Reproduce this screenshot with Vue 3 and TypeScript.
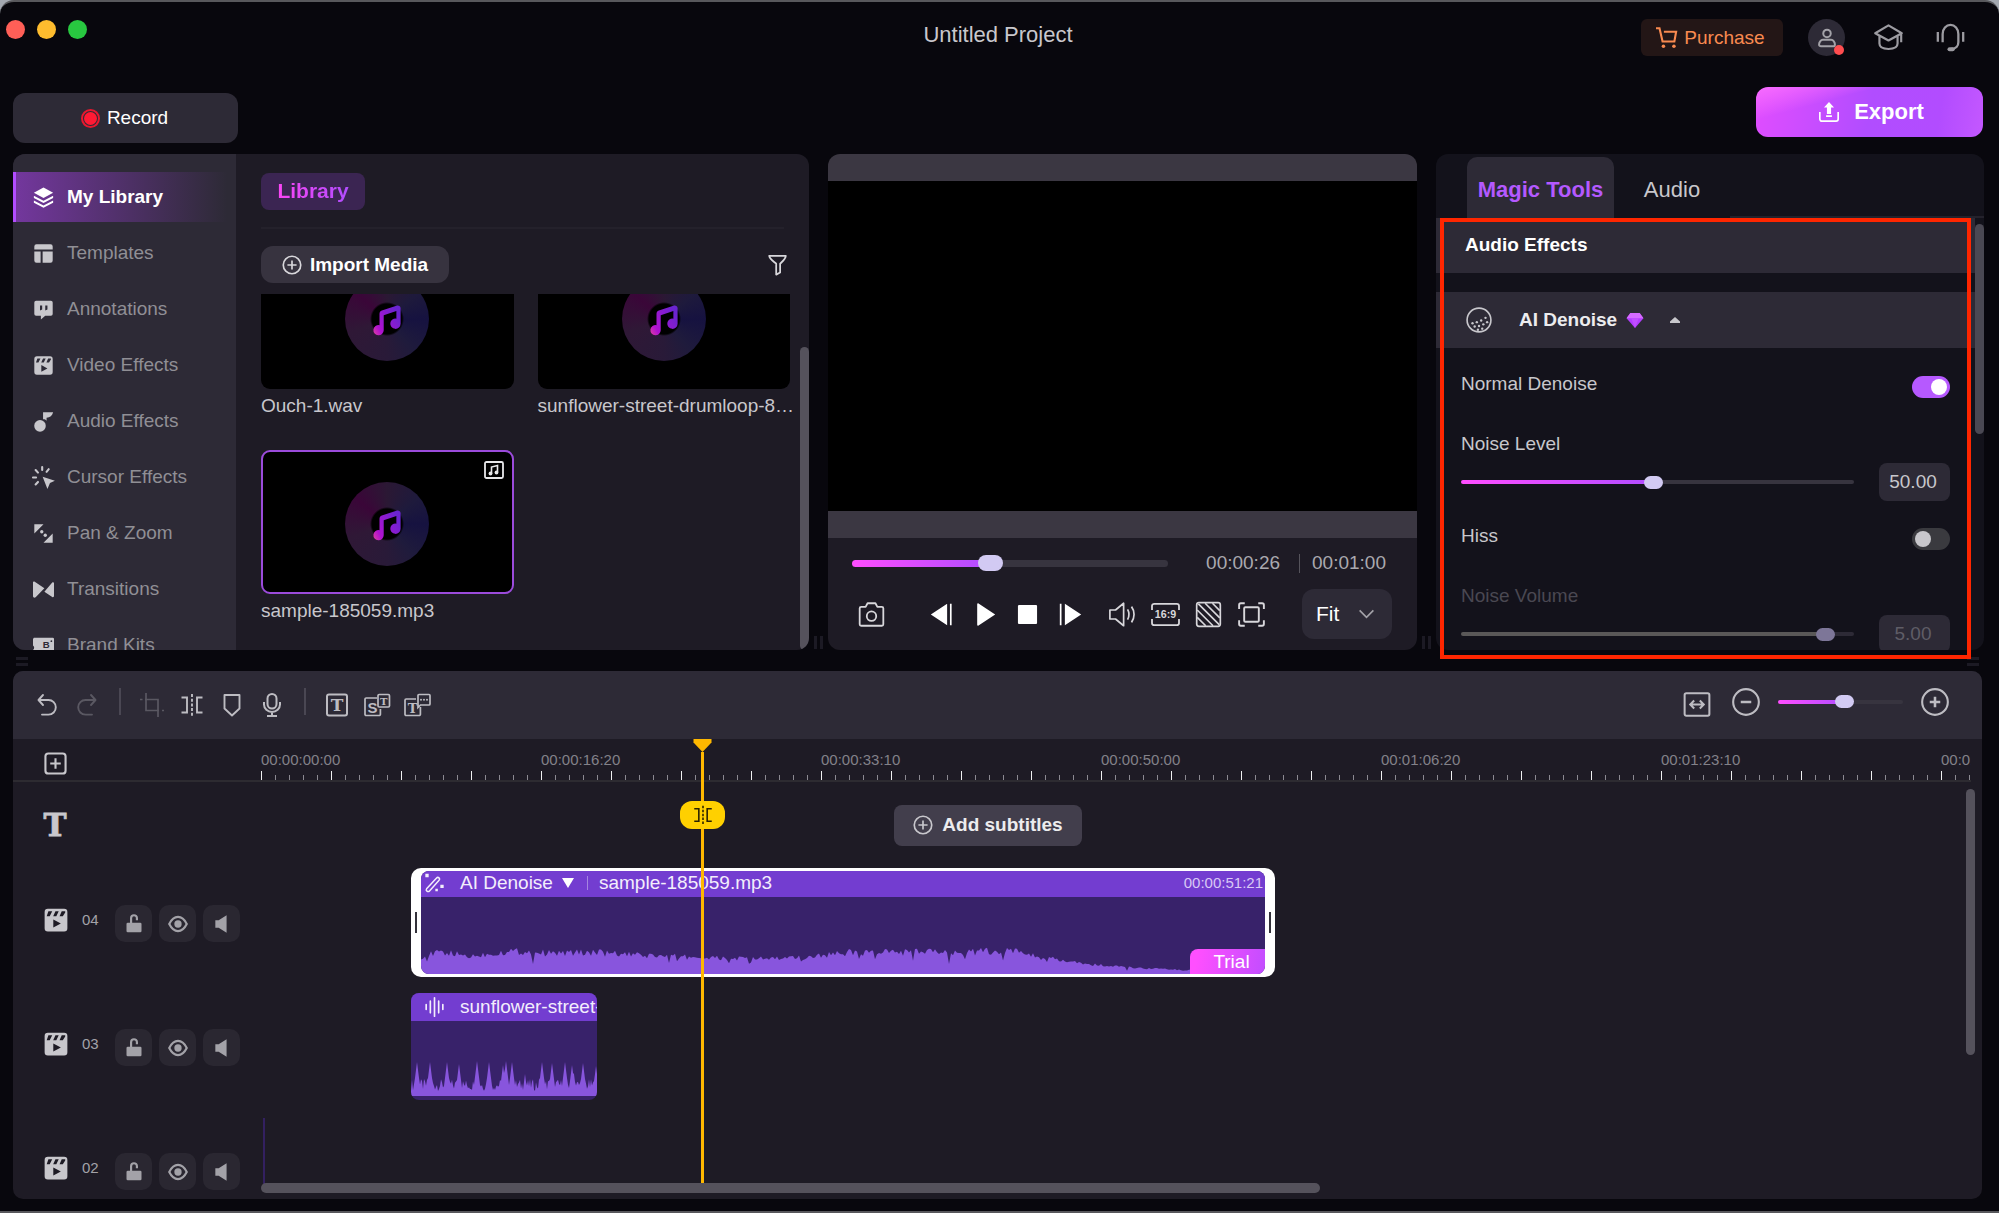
<script setup lang="ts">
import { ref } from 'vue'

const icons: Record<string, string> = {
  layers: '<g fill="currentColor"><path d="M12 .5 23 6.600 12 12.600 1 6.600z"/><path d="M1 10 12 15.800 23 10v2.600L12 18.400 1 12.600zM1 15.400 12 21.200l11-5.800V18l-11 5.800L1 18z"/></g>',
  template: '<g fill="currentColor"><path d="M4 1.500h16a2.500 2.500 0 0 1 2.500 2.500v3.500h-21V4A2.500 2.500 0 0 1 4 1.500zM1.500 9.700h7.200v12.800H4A2.500 2.500 0 0 1 1.500 20zM11 9.700h11.500V20a2.500 2.500 0 0 1-2.500 2.500h-9z"/></g>',
  note: '<path fill="currentColor" fill-rule="evenodd" d="M3.500 2h17A2 2 0 0 1 22.500 4v13a2 2 0 0 1-2 2H14l-5 4.500V19H3.500a2 2 0 0 1-2-2V4a2 2 0 0 1 2-2zM8 7.500v5.500l2.500-1V7.500zM14 7.500v5.500l2.500-1V7.500z"/>',
  clapper: '<path fill="currentColor" fill-rule="evenodd" d="M4.500 1.500h15a3 3 0 0 1 3 3v15a3 3 0 0 1-3 3h-15a3 3 0 0 1-3-3v-15a3 3 0 0 1 3-3zM5 4 3.400 8.500h2.800L8.500 4zM11.500 4 9.400 8.500h2.900L14.500 4zM17.300 4l-2 4.500h3L20.500 5V4zM9.500 11.500v7.500l7-3.700z"/>',
  audio: '<g fill="currentColor"><circle cx="8" cy="17" r="6.600"/><path d="M11.500 1.500h11.500c-1 4-3.500 6-7.500 6.200V11c-1.500-1.600-3-2-4-1.500z"/></g>',
  cursor: '<path fill="currentColor" d="m11 11 14 4.600-5.600 2.800L16.500 25z"/><path stroke="currentColor" stroke-width="2.400" stroke-linecap="round" d="M10.500 0v3.500M18 2.500l-2.500 3M3 3.500l2.700 2.900M0 12h3.500M3 20l2.700-2.900"/>',
  zoom: '<g fill="currentColor"><path d="M1.500 1.500h10.500L1.500 12zM22.500 12v10.500H12z"/><circle cx="10" cy="10" r="1.900"/><circle cx="14" cy="14" r="1.900"/></g>',
  transition: '<g fill="currentColor"><path d="M0 4c0-1 1-1.600 2-1l11 7.500L3 20.800c-1 1-3 .5-3-1zM24 5c0-1-1-1.600-2-1L13 14.500l9 6c1 .8 2 0 2-1z"/></g>',
  brand: '<path fill="currentColor" d="M1 3h21.500A1.500 1.500 0 0 1 24 4.500V22H0v-5a3 3 0 0 0 0-5V4.500z"/><text x="11" y="15" font-size="11" font-weight="700" fill="#2d2a36">B</text><circle cx="21" cy="7" r="1" fill="#2d2a36"/>',
  plusCircle: '<g fill="none" stroke="currentColor" stroke-width="2"><circle cx="12" cy="12" r="10.500"/><path d="M12 6.500v11M6.500 12h11"/></g>',
  filter: '<path fill="none" stroke="currentColor" stroke-width="2" stroke-linejoin="round" d="M2.500 1.500h19c-.3 3.500-3.500 6-6.500 9v10L10.500 23V10.500c-3.500-3-7.500-5.500-8-9z"/>',
  cart: '<g fill="none" stroke="currentColor" stroke-width="2.400"><path d="M0 1.500h4l3.500 15h13.500L23 5.500H9"/></g><g fill="currentColor"><circle cx="8.500" cy="22" r="2"/><circle cx="20.500" cy="22" r="2"/></g>',
  user: '<g fill="none" stroke="currentColor" stroke-width="2.400"><circle cx="12" cy="6.500" r="4.500"/><path d="M7 14.200h10c2.500 0 4.500 3 4.500 5.500 0 1.500-1 2.300-2.300 2.300H4.800c-1.300 0-2.300-.8-2.300-2.300 0-2.500 2-5.500 4.500-5.500z"/></g>',
  cap: '<g fill="none" stroke="currentColor" stroke-width="1.800" stroke-linejoin="round"><path d="M12 2 23 8.500 12 14.500 1 8.500zM4.500 11v6c0 3.500 3 4.500 7.500 4.500s7.500-1 7.500-4.500v-6M22.500 9v7"/></g>',
  headset: '<g fill="none" stroke="currentColor" stroke-width="1.900"><path d="M5.500 16V9a6.500 7.500 0 0 1 13 0v7c0 3-2 5.500-6 5.500M1.500 7.500v8M22.500 7.500v8"/></g><rect x="9.500" y="20" width="6" height="3.400" rx="1.700" fill="currentColor"/>',
  exportIcon: '<path fill="currentColor" d="m12 0 6 6.500h-3.500v8h-5v-8H6zM8.500 16h7v2h-7z"/><path fill="none" stroke="currentColor" stroke-width="2" d="M1 12v8.500A2.500 2.500 0 0 0 3.500 23h17a2.500 2.500 0 0 0 2.500-2.500V12"/>',
  camera: '<g fill="none" stroke="currentColor" stroke-width="1.600" stroke-linejoin="round"><path d="M1.500 6.500c0-.8.500-1.300 1.300-1.300h4L8.500 2h7l1.700 3.200h4c.8 0 1.300.5 1.300 1.300v14.200c0 .8-.5 1.300-1.300 1.300H2.800c-.8 0-1.300-.5-1.300-1.300z"/><circle cx="12" cy="13.500" r="4.200"/></g>',
  prev: '<path fill="currentColor" d="M2.500 12 17 2.500v19zM19.500 2.500H21v19h-1.500z"/>',
  play: '<path fill="currentColor" d="M5.500 2.800c0-.8.700-1 1.200-.6L21.500 12 6.700 21.800c-.5.400-1.200.2-1.200-.6z"/>',
  stop: '<rect x="3.500" y="3.500" width="17" height="17" rx="1" fill="currentColor"/>',
  next: '<path fill="currentColor" d="M21.500 12 7 2.500v19zM2.500 2.500H4v19H2.500z"/>',
  volume: '<g fill="none" stroke="currentColor" stroke-width="1.500" stroke-linejoin="round"><path d="M.8 8h5L13 2v20l-7.200-6h-5zM16.500 7.500c1.600 2.800 1.600 6.200 0 9M20 5c3 4 3 10 0 14"/></g>',
  ratio: '<path fill="none" stroke="currentColor" stroke-width="1.600" d="M0 8V4.500a2 2 0 0 1 2-2h20a2 2 0 0 1 2 2V8M0 16v3.500a2 2 0 0 0 2 2h20a2 2 0 0 0 2-2V16"/><text x="12" y="15.500" text-anchor="middle" font-size="9.500" font-weight="700" fill="currentColor">16:9</text>',
  hatch: '<g fill="none" stroke="currentColor" stroke-width="1.500"><rect x="1.500" y="1.500" width="21" height="21" rx="2"/><path d="m2 14.500 7.500 7.500M2 8l14 14M3 2.500 21.500 21M9 2l13 13M15.500 2 22 8.500"/></g>',
  full: '<g fill="none" stroke="currentColor" stroke-width="1.700"><rect x="5.500" y="5.500" width="13" height="13" rx="1"/><path d="M1 7V3.500A1.500 1.500 0 0 1 2.500 2H6M18 2h3.500A1.500 1.500 0 0 1 23 3.500V7M1 17v3.500A1.500 1.500 0 0 0 2.500 22H6M18 22h3.500a1.500 1.500 0 0 0 1.500-1.500V17"/></g>',
  denoise: '<circle cx="12" cy="12" r="11" fill="none" stroke="currentColor" stroke-width="1.500"/><g fill="currentColor"><circle cx="6" cy="15" r="1.100"/><circle cx="10" cy="14" r="1.100"/><circle cx="14" cy="12.500" r="1.100"/><circle cx="18" cy="10" r="1.100"/><circle cx="8" cy="18" r="1.100"/><circle cx="12" cy="17.500" r="1.100"/><circle cx="16" cy="16" r="1.100"/><circle cx="19.500" cy="14" r="1.100"/><circle cx="11" cy="21" r="1.100"/><circle cx="15" cy="20" r="1.100"/></g>',
  undo: '<path fill="none" stroke="currentColor" stroke-width="1.900" stroke-linecap="round" stroke-linejoin="round" d="m8 2-4.500 5L8 12M4 7h9.500a7.300 7.300 0 0 1 0 14.600H7"/>',
  redo: '<path fill="none" stroke="currentColor" stroke-width="1.900" stroke-linecap="round" stroke-linejoin="round" d="m16 2 4.500 5-4.500 5M20 7h-9.500a7.300 7.300 0 0 0 0 14.600H17"/>',
  crop: '<path fill="none" stroke="currentColor" stroke-width="1.700" d="M6 0v17.500h13M22 17.500h2M0 6.500h2.500M5 6.500h13V24"/>',
  split: '<g fill="none" stroke="currentColor" stroke-width="1.900"><path d="M1.500 4.500h5.500v15h-5.500M22.500 4.500H17v15h5.500"/><path stroke-dasharray="3 1.700" d="M12 1v22"/></g>',
  shield: '<path fill="none" stroke="currentColor" stroke-width="1.900" stroke-linejoin="round" d="M4.500 2h15v13.500L12 22.500l-7.500-7z"/>',
  mic: '<g fill="none" stroke="currentColor" stroke-width="2"><rect x="7.500" y="1" width="9" height="14.500" rx="4.500"/><path d="M4 9v2.500a8 7.500 0 0 0 16 0V9M12 19v4M7 23h10"/></g>',
  textBox: '<rect x="2" y="1.500" width="20" height="21" rx="2" fill="none" stroke="currentColor" stroke-width="2"/><text class="slab" x="12" y="18" text-anchor="middle" font-size="17" fill="currentColor">T</text>',
  styleText: '<g fill="none" stroke="currentColor" stroke-width="1.700"><path d="M12 5H1.200A1.200 1.200 0 0 0 0 6.200v15A1.200 1.200 0 0 0 1.200 22.500h13a1.200 1.200 0 0 0 1.200-1.200V16"/><rect x="13" y="1.500" width="11.500" height="12.500" rx="1.200"/></g><text x="7.500" y="19.500" text-anchor="middle" font-size="15" font-weight="700" fill="currentColor">S</text><text class="slab" x="18.800" y="11.500" text-anchor="middle" font-size="10" fill="currentColor">T</text>',
  bubbleText: '<g fill="none" stroke="currentColor" stroke-width="1.700"><path d="M11 6H1.200A1.200 1.200 0 0 0 0 7.200v14A1.200 1.200 0 0 0 1.200 22.500h13a1.200 1.200 0 0 0 1.200-1.200V14"/><path d="M14 1.500h10a1 1 0 0 1 1 1V11a1 1 0 0 1-1 1h-8.500L13 14.500v-12a1 1 0 0 1 1-1z"/></g><text class="slab" x="7.500" y="19.500" text-anchor="middle" font-size="13" fill="currentColor">T</text><g fill="currentColor"><circle cx="16" cy="6.800" r="1"/><circle cx="19" cy="6.800" r="1"/><circle cx="22" cy="6.800" r="1"/></g>',
  fitWidth: '<g fill="none" stroke="currentColor" stroke-width="1.800"><rect x="1" y="2" width="22" height="20" rx="1.500"/><path d="M6 12h12M9.500 8.500 6 12l3.500 3.500M14.500 8.500 18 12l-3.500 3.500"/></g>',
  minus: '<g fill="none" stroke="currentColor" stroke-width="1.800"><circle cx="12" cy="12" r="11"/><path stroke-width="2.200" d="M7.500 12h9"/></g>',
  plus: '<g fill="none" stroke="currentColor" stroke-width="1.800"><circle cx="12" cy="12" r="11"/><path stroke-width="2.200" d="M7.500 12h9M12 7.500v9"/></g>',
  addTrack: '<g fill="none" stroke="currentColor" stroke-width="2.200"><rect x="1.500" y="1.500" width="21" height="21" rx="3"/><path d="M12 6.500v11M6.500 12h11"/></g>',
  bigT: '<text class="slab" x="12" y="23" text-anchor="middle" font-size="31" fill="currentColor" stroke="currentColor" stroke-width="0.8">T</text>',
  lock: '<rect x="3" y="10.500" width="18" height="11.500" rx="1.500" fill="currentColor"/><path fill="none" stroke="currentColor" stroke-width="2.600" d="M8.500 11V5a3.500 3.500 0 0 1 7 0v2.500"/>',
  eye: '<path fill="none" stroke="currentColor" stroke-width="2.600" d="M1.500 12C4 7 7.500 3.500 12 3.500S20 7 22.500 12C20 17 16.500 20.500 12 20.500S4 17 1.500 12z"/><circle cx="12" cy="12" r="4.400" fill="currentColor"/>',
  speaker: '<path fill="currentColor" d="M4 7.500h4L17.500 1.500v21L8 16.500H4z"/>',
  wand: '<g fill="none" stroke="currentColor" stroke-width="1.800"><path d="m2.500 19 12-13a2 2 0 0 1 3 2.800L6 21.500c-2 2-5-.5-3.500-2.500z"/></g><g fill="currentColor"><path d="M1 1h4v4H1zM19 14h4v4h-4zM13 19h3v3h-3z"/></g>',
  bars: '<path stroke="currentColor" stroke-width="2" stroke-linecap="round" d="M2 9v6M7 5v14M12 1v22M17 5v14M22 9v6"/>',
  chevron: '<path fill="none" stroke="currentColor" stroke-width="2.600" d="m1 7 11 11L23 7"/>',
}

const menu = [
  { icon: 'layers', label: 'My Library', active: true },
  { icon: 'template', label: 'Templates' },
  { icon: 'note', label: 'Annotations' },
  { icon: 'clapper', label: 'Video Effects' },
  { icon: 'audio', label: 'Audio Effects' },
  { icon: 'cursor', label: 'Cursor Effects' },
  { icon: 'zoom', label: 'Pan & Zoom' },
  { icon: 'transition', label: 'Transitions' },
  { icon: 'brand', label: 'Brand Kits' },
]

const media = [
  { name: 'Ouch-1.wav', selected: false },
  { name: 'sunflower-street-drumloop-8…', selected: false },
  { name: 'sample-185059.mp3', selected: true },
]

const transport = [
  { icon: 'prev', label: 'Previous frame' },
  { icon: 'play', label: 'Play' },
  { icon: 'stop', label: 'Stop' },
  { icon: 'next', label: 'Next frame' },
]
const view = [
  { icon: 'volume', label: 'Volume' },
  { icon: 'ratio', label: 'Aspect ratio' },
  { icon: 'hatch', label: 'Background' },
  { icon: 'full', label: 'Full screen' },
]

const tools = [
  [
    { icon: 'undo', label: 'Undo' },
    { icon: 'redo', label: 'Redo', off: true },
  ],
  [
    { icon: 'crop', label: 'Crop', off: true },
    { icon: 'split', label: 'Split' },
    { icon: 'shield', label: 'Marker' },
    { icon: 'mic', label: 'Voiceover' },
  ],
  [
    { icon: 'textBox', label: 'Text' },
    { icon: 'styleText', label: 'Speech to text' },
    { icon: 'bubbleText', label: 'Text to speech' },
  ],
]

const stamps = ['00:00:00:00', '00:00:16:20', '00:00:33:10', '00:00:50:00', '00:01:06:20', '00:01:23:10', '00:01:40:00']

const position = ref(26)
const zoomLevel = ref(54)
const level = ref(49)
const hissLevel = ref(95)
const denoise = ref(true)
const hiss = ref(false)

const noise = (i: number) => {
  const v = Math.sin(i * 12.9898) * 43758.5453
  return v - Math.floor(v)
}

/* Height of the long clip's waveform, as [x, height] stops */
const envelope = [
  [0, 17], [20, 21], [50, 17], [90, 22], [130, 20], [170, 21], [215, 18], [250, 17], [300, 15],
  [370, 15], [400, 18], [430, 21], [500, 21], [596, 22], [620, 16], [660, 10], [710, 6], [760, 4], [844, 3],
]
const heightAt = (x: number) => {
  let i = 1
  while (i < envelope.length - 1 && envelope[i][0] < x) i++
  const [x0, h0] = envelope[i - 1]
  const [x1, h1] = envelope[i]
  return h0 + ((h1 - h0) * (x - x0)) / (x1 - x0)
}
const sampleWave = (() => {
  let d = 'M0 77'
  for (let x = 0; x <= 844; x += 2) {
    const h = heightAt(x)
    const dip = noise(x + 7) > 0.95 ? h * 0.4 : 0
    d += `L${x} ${(77 - h - (noise(x) - 0.4) * h * 0.35 + dip).toFixed(1)}`
  }
  return d + 'L844 77Z'
})()

const beats = [
  [6, 34], [19, 34], [36, 34], [48, 32], [66, 35], [78, 34], [92, 31], [95, 35], [101, 34], [114, 22],
  [131, 34], [141, 33], [154, 34], [161, 31], [163, 22], [172, 33], [185, 30],
]
const drumWave = (() => {
  let d = 'M0 73'
  for (let x = 0; x <= 186; x++) {
    let h = 5 + noise(x) * 12
    for (const [b, top] of beats) h = Math.max(h, top - Math.abs(x - b) * 8)
    d += `L${x} ${(75 - h).toFixed(1)}`
  }
  return d + 'L186 75L0 75Z'
})()

const tracks = [
  { id: '04', clip: 'sample' },
  { id: '03', clip: 'drums' },
  { id: '02', clip: 'sliver' },
]
const trackButtons = [
  { icon: 'lock', label: 'Lock track' },
  { icon: 'eye', label: 'Show track' },
  { icon: 'speaker', label: 'Mute track' },
]
</script>

<template>
  <div class="window">
    <header class="titlebar">
      <div class="lights"><i class="red"></i><i class="amber"></i><i class="green"></i></div>
      <h1>Untitled Project</h1>
      <div class="account">
        <button class="purchase" type="button">
          <svg viewBox="0 0 24 24" v-html="icons.cart"></svg>Purchase
        </button>
        <button class="avatar" type="button" aria-label="Account">
          <svg viewBox="0 0 24 24" v-html="icons.user"></svg><i></i>
        </button>
        <button class="plain" type="button" aria-label="Tutorials"><svg viewBox="0 0 24 24" v-html="icons.cap"></svg></button>
        <button class="plain" type="button" aria-label="Support"><svg viewBox="0 0 24 24" v-html="icons.headset"></svg></button>
      </div>
    </header>

    <div class="actions">
      <button class="record" type="button"><i></i>Record</button>
      <button class="export" type="button">
        <svg viewBox="0 0 24 24" v-html="icons.exportIcon"></svg>Export
      </button>
    </div>

    <main class="workspace">
      <section class="browser">
        <nav class="menu">
          <a v-for="m in menu" :key="m.label" href="#" :class="{ active: m.active }">
            <svg viewBox="0 0 24 24" v-html="icons[m.icon]"></svg>{{ m.label }}
          </a>
        </nav>
        <div class="library">
          <div class="library-head"><h2><span>Library</span></h2></div>
          <div class="library-tools">
            <button class="import" type="button"><svg viewBox="0 0 24 24" v-html="icons.plusCircle"></svg>Import Media</button>
            <button class="filter" type="button" aria-label="Filter"><svg viewBox="0 0 24 24" v-html="icons.filter"></svg></button>
          </div>
          <div class="media">
            <div class="media-grid">
              <figure v-for="f in media" :key="f.name">
                <div class="thumb" :class="{ selected: f.selected }">
                  <div class="disc">
                    <svg viewBox="0 0 32 34">
                      <defs>
                        <linearGradient id="note-fill" x1="0" x2="1" y1="1" y2="0.4">
                          <stop offset="0" stop-color="#e040a0" />
                          <stop offset="0.25" stop-color="#b012d0" />
                          <stop offset="1" stop-color="#6a24d0" />
                        </linearGradient>
                      </defs>
                      <path
                        fill="url(#note-fill)"
                        d="M8 23V11c0-2 .8-3 2.500-3.600L26 2.300c2-.7 4.500.3 4.500 2.600V21.500a5.500 5.500 0 1 1-4.500-5.400V8L12.500 12.500V28.500A5.500 5.500 0 1 1 8 23z"
                      />
                    </svg>
                  </div>
                  <svg v-if="f.selected" class="badge" viewBox="0 0 20 18">
                    <rect x="1" y="1" width="18" height="16" rx="1.500" fill="none" stroke="#e8e8ea" stroke-width="1.800" />
                    <path d="M7.500 12.500V6l6-1.500V11" fill="none" stroke="#e8e8ea" stroke-width="1.600" />
                    <circle cx="6.500" cy="12.500" r="1.900" fill="#e8e8ea" />
                    <circle cx="12.500" cy="11.500" r="1.900" fill="#e8e8ea" />
                  </svg>
                </div>
                <figcaption>{{ f.name }}</figcaption>
              </figure>
            </div>
          </div>
          <i class="bar library-bar"></i>
        </div>
      </section>

      <div class="grip-x"><i></i><i></i></div>

      <section class="preview">
        <div class="stage"></div>
        <div class="progress">
          <input v-model="position" class="range thick" type="range" min="0" max="60" aria-label="Playback position" :style="{ '--fill': (position / 60) * 100 + '%' }" />
          <time>00:00:26</time><i></i><time>00:01:00</time>
        </div>
        <div class="controls">
          <button type="button" aria-label="Snapshot"><svg viewBox="0 0 24 24" v-html="icons.camera"></svg></button>
          <div class="group solid">
            <button v-for="b in transport" :key="b.icon" type="button" :aria-label="b.label"><svg viewBox="0 0 24 24" v-html="icons[b.icon]"></svg></button>
          </div>
          <div class="group">
            <button v-for="b in view" :key="b.icon" type="button" :aria-label="b.label"><svg viewBox="0 0 24 24" v-html="icons[b.icon]"></svg></button>
          </div>
          <div class="fit">
            <select aria-label="Preview size"><option>Fit</option></select>
            <svg viewBox="0 0 24 24" v-html="icons.chevron"></svg>
          </div>
        </div>
      </section>

      <div class="grip-x"><i></i><i></i></div>

      <section class="inspector">
        <div class="inspector-body">
          <div class="tabs">
            <button class="on" type="button">Magic Tools</button>
            <button type="button">Audio</button>
            <i></i>
          </div>
          <div class="effects">
            <h3>Audio Effects</h3>
            <button class="effect" type="button">
              <svg class="effect-icon" viewBox="0 0 24 24" v-html="icons.denoise"></svg>
              AI Denoise
              <svg class="gem" viewBox="0 0 18 16">
                <path d="M4 0h10l4 5.500L9 16 0 5.500z" fill="#b23cff" />
                <path d="M4 0h10l4 5.500H0z" fill="#d56bff" />
                <path d="M5 5.500h8L9 16z" fill="#c04dff" />
              </svg>
              <svg class="caret" viewBox="0 0 10 6"><path d="M5 0l5 4.500V6H0V4.500z" fill="#c8c7cc" /></svg>
            </button>
            <div class="params">
              <label class="toggle">Normal Denoise<input v-model="denoise" type="checkbox" /></label>
              <div class="param">
                <label for="noise-level">Noise Level</label>
                <div>
                  <input id="noise-level" v-model="level" class="range" type="range" :style="{ '--fill': level + '%' }" />
                  <input class="value" type="text" value="50.00" aria-label="Noise level value" />
                </div>
              </div>
              <label class="toggle">Hiss<input v-model="hiss" type="checkbox" /></label>
              <div class="param disabled">
                <label for="noise-volume">Noise Volume</label>
                <div>
                  <input id="noise-volume" v-model="hissLevel" class="range" type="range" disabled :style="{ '--fill': hissLevel + '%' }" />
                  <input class="value" type="text" value="5.00" disabled aria-label="Noise volume value" />
                </div>
              </div>
            </div>
          </div>
          <i class="bar inspector-bar"></i>
        </div>
        <div class="highlight"></div>
      </section>
    </main>

    <div class="grip-y"><span><i></i><i></i></span><span><i></i><i></i></span></div>

    <section class="timeline">
      <div class="toolbar">
        <template v-for="(group, n) in tools" :key="n">
          <i v-if="n" class="sep"></i>
          <div class="group">
            <button v-for="t in group" :key="t.icon" type="button" :aria-label="t.label" :disabled="t.off"><svg viewBox="0 0 24 24" v-html="icons[t.icon]"></svg></button>
          </div>
        </template>
        <button class="fit-width" type="button" aria-label="Fit to window"><svg viewBox="0 0 24 24" v-html="icons.fitWidth"></svg></button>
        <div class="zoomer">
          <button type="button" aria-label="Zoom out"><svg viewBox="0 0 24 24" v-html="icons.minus"></svg></button>
          <input v-model="zoomLevel" class="range" type="range" aria-label="Timeline zoom" :style="{ '--fill': zoomLevel + '%' }" />
          <button type="button" aria-label="Zoom in"><svg viewBox="0 0 24 24" v-html="icons.plus"></svg></button>
        </div>
      </div>

      <div class="tracks">
        <div class="row ruler-row">
          <div class="head">
            <button type="button" aria-label="Add track"><svg viewBox="0 0 24 24" v-html="icons.addTrack"></svg></button>
          </div>
          <div class="ruler"><span v-for="s in stamps" :key="s">{{ s }}</span></div>
        </div>

        <div class="row subtitle-row">
          <div class="head"><svg viewBox="0 0 24 24" v-html="icons.bigT"></svg></div>
          <button class="subtitles" type="button"><svg viewBox="0 0 24 24" v-html="icons.plusCircle"></svg>Add subtitles</button>
        </div>

        <div v-for="t in tracks" :key="t.id" class="row track">
          <div class="head">
            <div class="track-id"><svg viewBox="0 0 24 24" v-html="icons.clapper"></svg>{{ t.id }}</div>
            <button v-for="b in trackButtons" :key="b.icon" type="button" :aria-label="b.label"><svg viewBox="0 0 24 24" v-html="icons[b.icon]"></svg></button>
          </div>

          <div v-if="t.clip === 'sample'" class="frame">
            <i class="edge"></i>
            <div class="clip">
              <div class="clip-head">
                <svg viewBox="0 0 24 24" v-html="icons.wand"></svg>
                <span>AI Denoise</span>
                <svg class="down" viewBox="0 0 12 10"><path d="M0 0h12L6 10z" fill="#fff" /></svg>
                <i></i>
                <span>sample-185059.mp3</span>
                <time>00:00:51:21</time>
              </div>
              <svg class="wave" viewBox="0 0 844 77" preserveAspectRatio="none"><path :d="sampleWave" /></svg>
              <span class="trial">Trial</span>
            </div>
            <i class="edge"></i>
          </div>

          <div v-else-if="t.clip === 'drums'" class="clip drums">
            <div class="clip-head">
              <svg viewBox="0 0 24 24" v-html="icons.bars"></svg>
              <span>sunflower-street-</span>
            </div>
            <svg class="wave" viewBox="0 0 186 76" preserveAspectRatio="none"><path :d="drumWave" /></svg>
          </div>

          <div v-else class="sliver"></div>
        </div>

        <div class="playhead">
          <svg viewBox="0 0 18 13"><path d="M0 0h18v3.500L9 13 0 3.500z" fill="#ffb800" /></svg>
          <i></i>
          <button type="button" aria-label="Split at playhead"><svg viewBox="0 0 24 24" v-html="icons.split"></svg></button>
        </div>
        <i class="bar bar-y"></i>
        <i class="bar bar-x"></i>
      </div>
    </section>
  </div>
</template>

<style>
html,
body {
  margin: 0;
  background: #a3a8b0;
}
svg text {
  font-family: "Liberation Sans", Arial, sans-serif;
}
svg text.slab {
  font-family: "DejaVu Serif", serif;
  font-weight: 700;
}
</style>

<style scoped>
* {
  box-sizing: border-box;
}
.window {
  display: flex;
  flex-direction: column;
  min-height: 100vh;
  border: solid #58585c;
  border-width: 2px 0;
  border-radius: 14px 14px 0 0;
  background: #08070d;
  color: #c8c7cc;
  font: 19px/24px "Liberation Sans", Arial, sans-serif;
  overflow: hidden;
}
button,
input,
select {
  margin: 0;
  padding: 0;
  border: 0;
  background: none;
  color: inherit;
  font: inherit;
}
button {
  display: flex;
  align-items: center;
  justify-content: center;
}
svg {
  display: block;
  flex: none;
  overflow: visible;
}
h1,
h2,
h3,
figure {
  margin: 0;
}

/* Title bar */
.titlebar {
  display: grid;
  grid-template-columns: 1fr auto 1fr;
  align-items: start;
  height: 85px;
  padding: 17px 33px 0 6px;
}
.lights {
  display: flex;
  gap: 12px;
  padding-top: 1px;
}
.lights i {
  width: 19px;
  height: 19px;
  border-radius: 50%;
}
.red {
  background: #ff5f57;
}
.amber {
  background: #febc2e;
}
.green {
  background: #28c840;
}
h1 {
  padding: 4px 0 0 24px;
  font-size: 22px;
  font-weight: 400;
}
.account {
  display: flex;
  justify-content: flex-end;
  align-items: center;
}
.purchase {
  gap: 7px;
  width: 142px;
  height: 37px;
  margin-right: 25px;
  padding-right: 3px;
  border-radius: 6px;
  background: #231616;
  color: #f98a50;
}
.purchase svg {
  width: 21px;
  height: 21px;
}
.avatar {
  position: relative;
  width: 37px;
  height: 37px;
  margin-right: 28px;
  border-radius: 50%;
  background: #2d2a36;
  color: #a3a2a8;
}
.avatar svg {
  width: 20px;
  height: 20px;
}
.avatar i {
  position: absolute;
  right: 1px;
  bottom: 1px;
  width: 10px;
  height: 10px;
  border-radius: 50%;
  background: #ff4d4f;
}
.plain {
  color: #9c9ba1;
}
.plain svg {
  width: 31px;
  height: 29px;
}
.plain + .plain {
  margin-left: 31px;
}

/* Record and export */
.actions {
  display: flex;
  justify-content: space-between;
  height: 67px;
  padding: 0 16px 0 13px;
}
.record {
  gap: 7px;
  width: 225px;
  height: 50px;
  margin-top: 6px;
  padding-right: 2px;
  border-radius: 12px;
  background: #2d2a36;
  color: #fff;
}
.record i {
  width: 19px;
  height: 19px;
  border: 2px solid #e8182f;
  border-radius: 50%;
  background: #ff1a34 content-box;
  padding: 1px;
}
.export {
  gap: 15px;
  width: 227px;
  height: 50px;
  padding-left: 4px;
  border-radius: 12px;
  background: linear-gradient(165deg, #f86cff 0%, rgba(217, 77, 255, 0) 30%), linear-gradient(100deg, #e04dff 0%, #d04dff 18%, #b14dff 50%, #b24cff 80%, #c458ff 100%);
  color: #fff;
  font-size: 22px;
  font-weight: 700;
}
.export svg {
  width: 20px;
  height: 20px;
}

/* Workspace */
.workspace {
  display: grid;
  grid-template-rows: 496px;
  grid-template-columns: minmax(0, 796fr) 19px minmax(0, 589fr) 19px minmax(0, 548fr);
  padding: 0 15px 0 13px;
}
.grip-x {
  display: flex;
  align-items: flex-end;
  justify-content: center;
  gap: 3px;
  padding-bottom: 1px;
}
.grip-x i {
  width: 3px;
  height: 13px;
  background: #1c1a24;
}
.grip-y {
  display: flex;
  justify-content: space-between;
  height: 21px;
  padding: 7px 20px 0 16px;
}
.grip-y i {
  display: block;
  width: 12px;
  height: 3px;
  margin-bottom: 3px;
  background: #1c1a24;
}
.bar {
  position: absolute;
  width: 9px;
  border-radius: 5px;
  background: #55525c;
}
.browser {
  display: flex;
  border-radius: 12px;
  background: #1e1b25;
  overflow: hidden;
}
.menu {
  display: flex;
  flex: none;
  flex-direction: column;
  gap: 6px;
  width: 223px;
  padding-top: 18px;
  background: #2d2a36;
}
.menu a {
  display: flex;
  flex: none;
  align-items: center;
  gap: 13px;
  height: 50px;
  padding-left: 20px;
  color: #908f95;
  text-decoration: none;
}
.menu svg {
  width: 21px;
  height: 21px;
  color: #c8c7cc;
}
.menu .active {
  border-left: 3px solid #b24cff;
  padding-left: 17px;
  background: linear-gradient(90deg, #73379d, #2d2a36 96%);
  color: #fff;
  font-weight: 700;
}
.menu .active svg {
  color: #fff;
}
.library {
  position: relative;
  display: flex;
  flex: 1;
  flex-direction: column;
  min-width: 0;
  padding: 19px 10px 0 25px;
}
.library-head {
  height: 56px;
  margin-right: 15px;
  border-bottom: 2px solid #24212b;
}
h2 {
  width: 104px;
  height: 37px;
  border-radius: 8px;
  background: #3b2552;
  font-size: 21px;
  line-height: 36px;
  text-align: center;
}
h2 span {
  background: linear-gradient(90deg, #fb45f5, #b14dff);
  background-clip: text;
  color: transparent;
}
.library-tools {
  display: flex;
  align-items: center;
  justify-content: space-between;
  margin: 17px 11px 11px 0;
}
.import {
  gap: 8px;
  width: 188px;
  height: 37px;
  border-radius: 12px;
  background: #37333f;
  color: #fff;
  font-weight: 700;
}
.import svg {
  width: 20px;
  height: 20px;
  color: #d8d7db;
}
.filter svg {
  width: 21px;
  height: 22px;
  color: #d8d7db;
}
.media {
  flex: 1;
  min-height: 0;
  overflow: hidden;
}
.media-grid {
  display: grid;
  grid-template-columns: repeat(2, minmax(0, 1fr));
  gap: 27px 24px;
  margin: -49px 9px 0 0;
}
.thumb {
  position: relative;
  display: flex;
  align-items: center;
  justify-content: center;
  height: 144px;
  padding-top: 4px;
  border-radius: 9px;
  background: #000;
}
.thumb.selected {
  border: 2px solid #9b4bdb;
}
.disc {
  display: flex;
  align-items: center;
  justify-content: center;
  width: 84px;
  height: 84px;
  border-radius: 50%;
  background: radial-gradient(circle, #000 0 15px, transparent 17px),
    conic-gradient(#2b1834, #1e1a3c 50deg, #161240 90deg, #1f1b3c 140deg, #291a38 180deg, #2f1836 250deg, #3a0638 310deg, #2b1834);
}
.disc svg {
  width: 30px;
  height: 33px;
}
.badge {
  position: absolute;
  top: 9px;
  right: 8px;
  width: 20px;
  height: 18px;
}
figcaption {
  line-height: 34px;
  white-space: nowrap;
}
.library-bar {
  top: 193px;
  right: 0;
  bottom: 0;
}

/* Preview */
.preview {
  display: flex;
  flex-direction: column;
  border-radius: 12px;
  background: #1e1b25;
  overflow: hidden;
}
.stage {
  flex: 1;
  border: solid #3b3742;
  border-width: 27px 0;
  background: #000;
}
.progress {
  display: flex;
  align-items: center;
  height: 50px;
  padding: 0 31px 0 24px;
}
.progress .range {
  flex: 1;
  margin-right: 38px;
}
.progress i {
  width: 1px;
  height: 19px;
  margin: 0 12px 0 19px;
  background: #55535b;
}
time {
  color: #aaa9af;
}
.controls {
  display: flex;
  align-items: center;
  height: 62px;
  padding: 0 25px 10px 30px;
  color: #d8d7db;
}
.controls svg {
  width: 27px;
  height: 27px;
}
.group {
  display: flex;
  gap: 16px;
}
.controls .solid {
  margin: 0 25px 0 43px;
  color: #fff;
}
.fit {
  position: relative;
  width: 90px;
  margin-left: auto;
}
.fit select {
  width: 100%;
  height: 50px;
  padding-left: 14px;
  border-radius: 12px;
  background: #2d2a36;
  color: #fff;
  font-size: 21px;
  appearance: none;
}
.fit svg {
  position: absolute;
  top: 17px;
  right: 18px;
  width: 15px;
  height: 15px;
  color: #a3a2a8;
  pointer-events: none;
}

/* Sliders */
.range {
  --track: 4px;
  --thumb-w: 19px;
  --thumb-h: 13px;
  min-width: 0;
  height: 20px;
  appearance: none;
}
.range.thick {
  --track: 7px;
  --thumb-w: 25px;
  --thumb-h: 16px;
}
.range::-webkit-slider-runnable-track {
  height: var(--track);
  border-radius: 4px;
  background: linear-gradient(90deg, #ff4dff, #b14dff) 0 0 / var(--fill) 100% no-repeat, #37343f;
}
.range::-webkit-slider-thumb {
  width: var(--thumb-w);
  height: var(--thumb-h);
  margin-top: calc((var(--track) - var(--thumb-h)) / 2);
  border-radius: 8px;
  background: #d2caf3;
  appearance: none;
}
.range:disabled::-webkit-slider-runnable-track {
  background: linear-gradient(#5a5858, #5a5858) 0 0 / var(--fill) 100% no-repeat, #2d2a36;
}
.range:disabled::-webkit-slider-thumb {
  background: #7d7698;
}

/* Inspector */
.inspector {
  position: relative;
}
.inspector-body {
  position: relative;
  display: flex;
  flex-direction: column;
  height: 100%;
  border-radius: 12px;
  background: #13121b;
  overflow: hidden;
}
.tabs {
  display: flex;
  flex: none;
  align-items: flex-end;
  height: 64px;
  padding: 3px 0 0 31px;
  font-size: 22px;
}
.tabs button {
  width: 116px;
  height: 100%;
  padding-top: 4px;
}
.tabs .on {
  width: 147px;
  border-radius: 10px 10px 0 0;
  background: #2d2a36;
  color: #b459ff;
  font-weight: 700;
}
.tabs i {
  flex: 1;
  height: 2px;
  background: #24222c;
}
.effects {
  flex: 1;
  min-height: 0;
  margin-right: 9px;
  overflow: hidden;
}
h3 {
  height: 55px;
  padding-left: 29px;
  background: #2d2a36;
  color: #fff;
  font-size: 19px;
  line-height: 54px;
}
.effect {
  justify-content: flex-start;
  width: 100%;
  height: 56px;
  margin-top: 19px;
  padding-left: 30px;
  background: #2d2a36;
  color: #ececee;
  font-weight: 700;
}
.effect-icon {
  width: 26px;
  height: 26px;
  margin-right: 27px;
  color: #c8c7cc;
}
.gem {
  width: 18px;
  height: 15px;
  margin: 0 26px 0 9px;
}
.caret {
  width: 10px;
  height: 6px;
}
.params {
  padding: 24px 25px 0;
}
.toggle {
  display: flex;
  justify-content: space-between;
  height: 60px;
}
.toggle input {
  width: 38px;
  height: 22px;
  margin-top: 4px;
  padding: 3px;
  border-radius: 11px;
  background: #3a3a3f;
  appearance: none;
}
.toggle input::before {
  content: "";
  display: block;
  width: 16px;
  height: 16px;
  border-radius: 50%;
  background: #c8c7cc;
}
.toggle input:checked {
  background: #b659ff;
}
.toggle input:checked::before {
  margin-left: auto;
  background: #fff;
}
.param {
  height: 92px;
}
.param label {
  display: block;
  height: 31px;
}
.param > div {
  display: flex;
  align-items: center;
  gap: 25px;
}
.param .range {
  flex: 1;
}
.value {
  width: 71px;
  height: 38px;
  padding-right: 3px;
  border-radius: 8px;
  background: #2d2a36;
  text-align: center;
}
.disabled {
  color: #4a4852;
}
.disabled .value {
  color: #5f5d66;
}
.inspector-bar {
  top: 70px;
  right: 0;
  height: 210px;
  background: #4a4853;
}
.highlight {
  position: absolute;
  inset: 64px 13px -9px 4px;
  border: 4px solid #ff2600;
  pointer-events: none;
}

/* Timeline */
.timeline {
  display: flex;
  flex: 1;
  flex-direction: column;
  margin: 0 17px 12px 13px;
  border-radius: 10px;
  background: #1e1b25;
  overflow: hidden;
}
.toolbar {
  display: flex;
  align-items: center;
  height: 68px;
  padding: 0 33px 1px 20px;
  background: #2d2a36;
  color: #bdbcc2;
}
.toolbar .group {
  gap: 12px;
}
.toolbar svg {
  width: 28px;
  height: 24px;
}
.toolbar button:disabled {
  color: #5a5862;
}
.sep {
  width: 2px;
  height: 27px;
  margin: 0 17px 6px 18px;
  background: #4a4753;
}
.toolbar .fit-width {
  margin: 0 21px 0 auto;
}
.fit-width svg {
  height: 27px;
}
.zoomer {
  display: flex;
  align-items: center;
  gap: 18px;
  padding-bottom: 6px;
}
.zoomer .range {
  width: 125px;
}
.zoomer svg {
  height: 28px;
}
.tracks {
  position: relative;
  flex: 1 1 460px;
  overflow: hidden;
}
.row {
  display: flex;
}
.head {
  display: flex;
  flex: none;
  align-items: center;
  width: 248px;
  padding-left: 30px;
}
.ruler-row {
  height: 43px;
  margin-right: 11px;
  border-bottom: 2px solid #2d2b31;
}
.ruler-row svg {
  width: 23px;
  height: 23px;
}
.ruler-row .head {
  padding: 7px 0 0 31px;
}
.ruler {
  display: flex;
  flex: 1;
  min-width: 0;
  overflow: hidden;
  background: repeating-linear-gradient(90deg, #f0f0f2 0 1px, transparent 1px 70px) 0 100% / 100% 9px no-repeat,
    repeating-linear-gradient(90deg, #8b8991 0 1px, transparent 1px 14px) 0 100% / 100% 5px no-repeat;
}
.ruler span {
  flex: 0 0 280px;
  color: #838189;
  font-size: 15px;
  line-height: 42px;
}
.subtitle-row {
  align-items: center;
  height: 86px;
}
.head > svg {
  width: 24px;
  height: 24px;
}
.subtitles {
  gap: 9px;
  width: 188px;
  height: 41px;
  margin-left: 633px;
  border-radius: 8px;
  background: #423e4c;
  color: #ececee;
  font-weight: 700;
}
.subtitles svg {
  width: 20px;
  height: 20px;
  color: #c8c7cc;
}
.track {
  height: 124px;
}
.track .head {
  gap: 7px;
  height: 111px;
}
.track-id {
  display: flex;
  align-items: center;
  gap: 13px;
  width: 65px;
  padding-bottom: 8px;
  color: #a3a2a8;
  font-size: 15px;
}
.track-id svg {
  width: 26px;
  height: 26px;
  color: #c8c7cc;
}
.track .head button {
  width: 37px;
  height: 37px;
  border-radius: 10px;
  background: #2a2731;
  color: #a3a2a8;
}
.track .head button svg {
  width: 20px;
  height: 20px;
}
.frame {
  display: flex;
  width: 864px;
  height: 109px;
  margin-left: 150px;
  padding: 3px 0;
  border-radius: 10px;
  background: #fff;
}
.edge {
  display: flex;
  align-items: center;
  justify-content: center;
  width: 10px;
}
.edge::before {
  content: "";
  width: 2px;
  height: 21px;
  background: #33313a;
}
.clip {
  position: relative;
  display: flex;
  flex: 1;
  flex-direction: column;
  min-width: 0;
  border-radius: 8px;
  background: #38226a;
  overflow: hidden;
}
.clip-head {
  display: flex;
  flex: none;
  align-items: center;
  height: 26px;
  padding: 0 0 2px 3px;
  background: #733dd0;
  color: #f3eefc;
  white-space: nowrap;
}
.clip-head svg {
  width: 21px;
  height: 20px;
  margin-right: 15px;
}
.clip-head .down {
  width: 12px;
  height: 10px;
  margin: 0 13px 0 9px;
}
.clip-head i {
  width: 1px;
  height: 14px;
  margin-right: 11px;
  background: #a585e0;
}
.clip-head time {
  margin-left: auto;
  padding-right: 2px;
  color: #d9c9f5;
  font-size: 15px;
}
.wave {
  width: 100%;
  height: 77px;
  fill: #8855dd;
}
.trial {
  position: absolute;
  right: 0;
  bottom: 0;
  width: 75px;
  height: 25px;
  border-radius: 8px 0 0 0;
  background: linear-gradient(100deg, #ff4fff 10%, #c24dff);
  color: #fff;
  font-size: 19px;
  line-height: 25px;
  text-align: center;
  text-indent: 8px;
}
.drums {
  flex: none;
  width: 186px;
  height: 107px;
  margin: 1px 0 0 150px;
}
.drums .clip-head {
  height: 28px;
  padding: 0 0 0 13px;
}
.drums .wave {
  height: 76px;
}
.sliver {
  width: 2px;
  height: 66px;
  margin: 2px 0 0 2px;
  background: #332060;
}
.playhead {
  position: absolute;
  top: 0;
  bottom: 10px;
  left: 666px;
  display: flex;
  flex-direction: column;
  align-items: center;
  width: 47px;
}
.playhead > svg {
  width: 19px;
  height: 13px;
}
.playhead i {
  flex: 1;
  width: 3px;
  background: #ffb800;
}
.playhead button {
  position: absolute;
  top: 62px;
  width: 45px;
  height: 28px;
  border-radius: 12px;
  background: #ffd000;
  color: #2a2200;
}
.playhead button svg {
  width: 26px;
  height: 20px;
}
.bar-y {
  top: 50px;
  right: 7px;
  height: 266px;
}
.bar-x {
  bottom: 6px;
  left: 248px;
  width: 1059px;
  height: 10px;
}
</style>
